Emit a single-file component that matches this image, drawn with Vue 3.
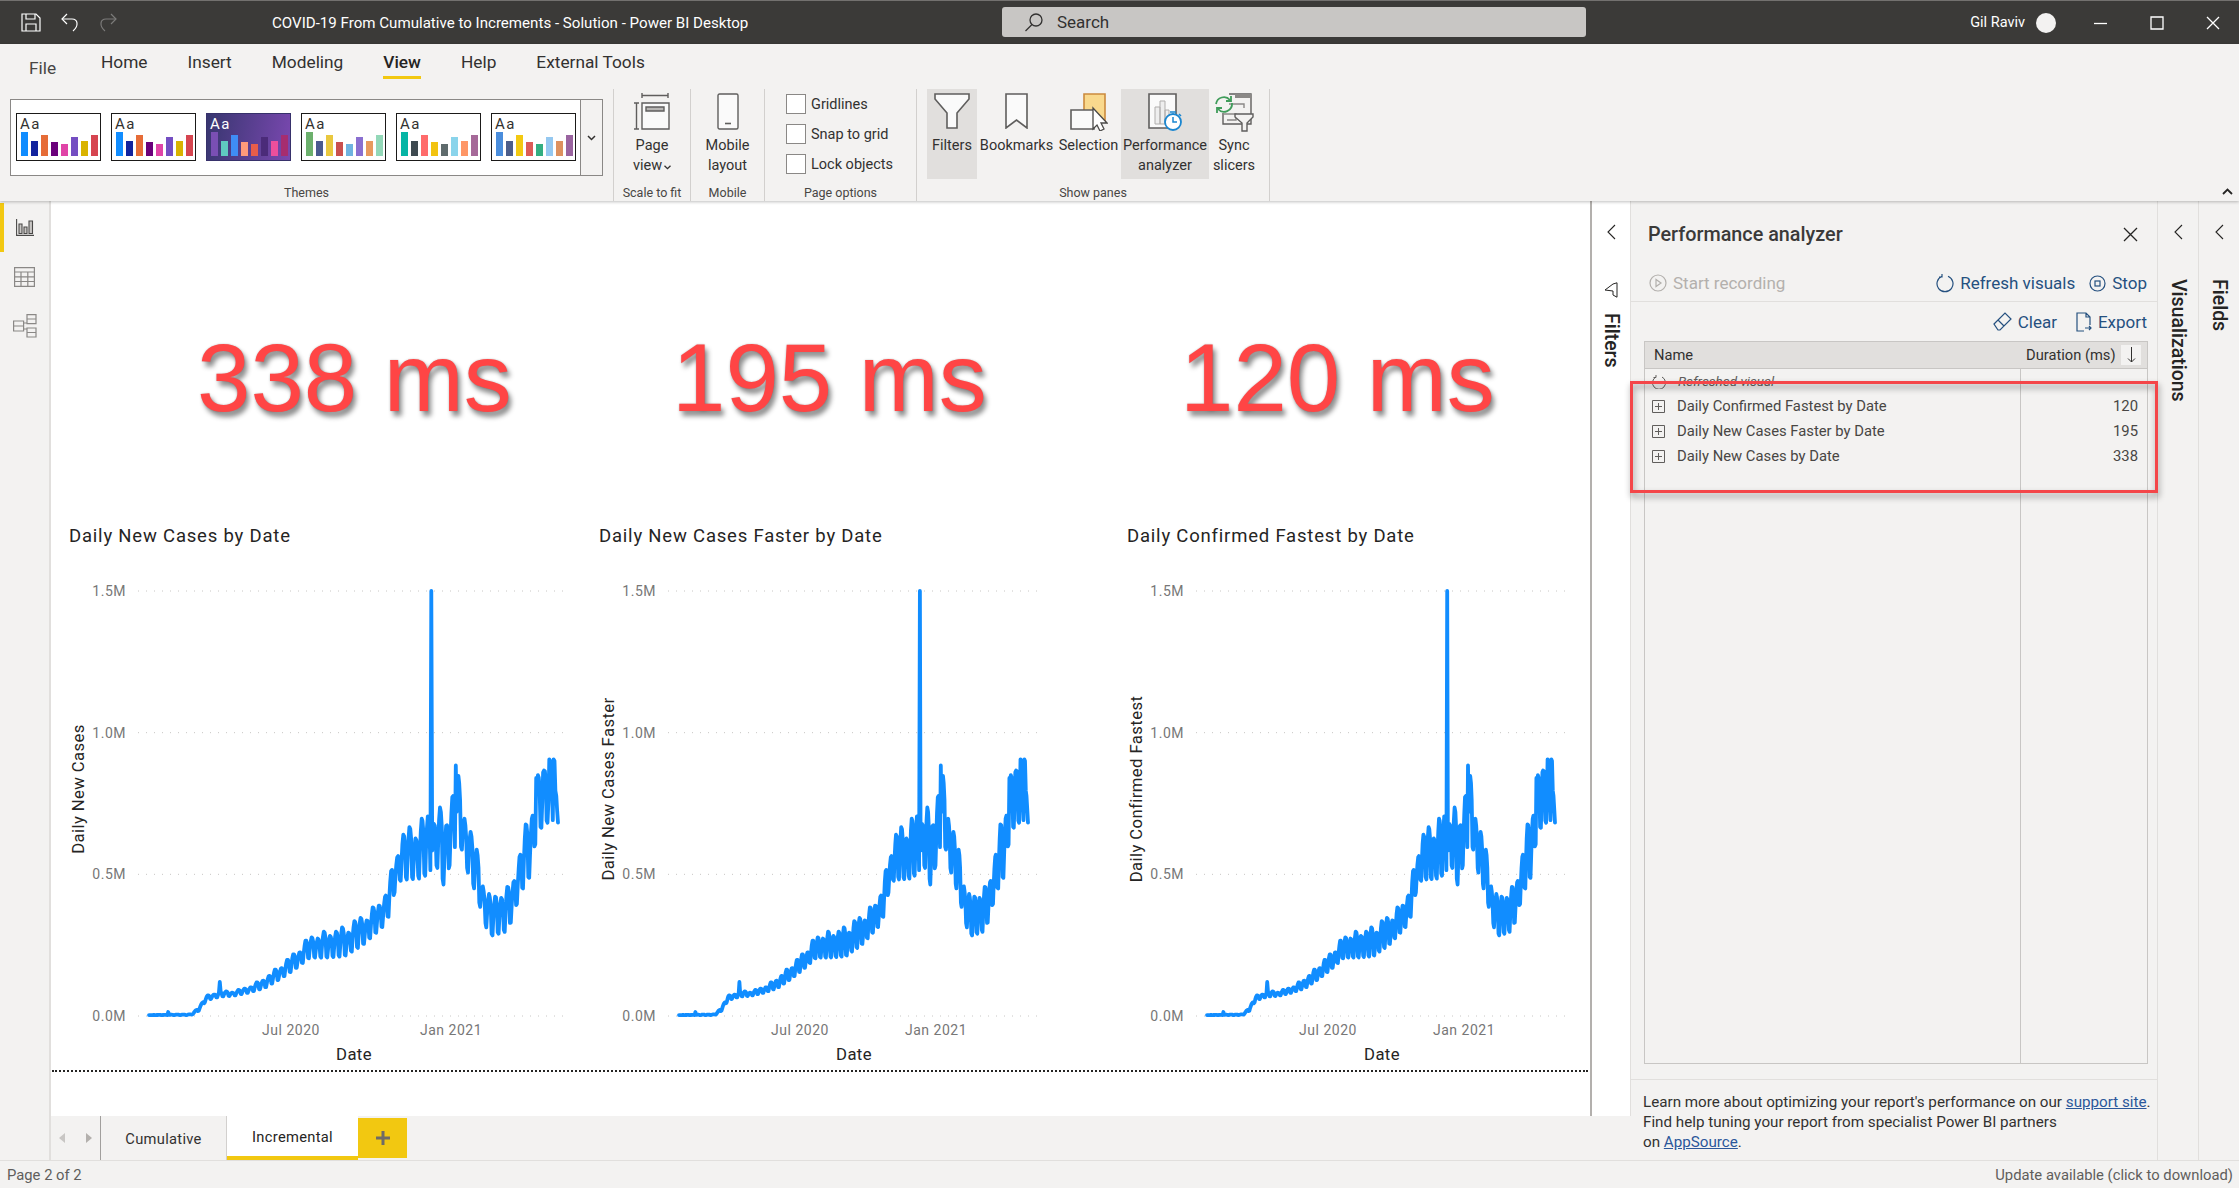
<script setup>
// weekly-saw envelope of the covid line, read off the reference: [x, high y, low y] in crop coordinates
const envelope = [
  [390, 1176, 1176], [500, 1174, 1176], [520, 1158, 1166], [540, 1132, 1142], [575, 1122, 1134], [610, 1122, 1132],
  [650, 1112, 1125], [690, 1092, 1115], [730, 1065, 1095], [770, 1035, 1072], [810, 995, 1045], [850, 985, 1045],
  [900, 975, 1042], [950, 950, 1015], [1000, 910, 975], [1020, 855, 945], [1035, 808, 880], [1050, 760, 868],
  [1100, 730, 865], [1145, 698, 840], [1165, 720, 895], [1175, 685, 835], [1192, 608, 795], [1210, 680, 800],
  [1220, 730, 845], [1240, 780, 890], [1255, 830, 930], [1270, 890, 975], [1285, 910, 995], [1305, 885, 990],
  [1325, 885, 985], [1340, 860, 955], [1355, 815, 910], [1368, 755, 885], [1385, 715, 860], [1400, 632, 780],
  [1420, 622, 738], [1435, 592, 738], [1447, 592, 740], [1458, 738, 738],
]
const week = [0.05, 0, 0.45, 0.8, 1, 0.95, 0.75]
const days = 469
// one-off days: the small bumps, the big spike and the tallest peaks
const specials = { 22: 0.014, 81: 0.12, 323: 1.5, 351: 0.884, 443: 0.84, 451: 0.86, 458: 0.906, 459: 0.9, 463: 0.906, 464: 0.9 }

function valueAt(day) {
  if (specials[day]) return specials[day]
  const x = 390 + (1068 * day) / (days - 1)
  let i = 0
  while (i < envelope.length - 2 && envelope[i + 1][0] < x) i++
  const a = envelope[i]
  const b = envelope[i + 1]
  const f = (x - a[0]) / (b[0] - a[0])
  const hi = a[1] + (b[1] - a[1]) * f
  const lo = a[2] + (b[2] - a[2]) * f
  // the real data is not a clean saw, so vary each week's swing a little
  const wk = Math.floor(day / 7)
  const amp = Math.min(1, 0.92 + 0.2 * Math.sin(wk * 2.3))
  return (1178 - (lo + (hi - lo) * week[day % 7] * amp)) / 645
}

const zeroY = 455
const maxY = 30
const toY = (v) => zeroY - (v * (zeroY - maxY)) / 1.5

function linePoints(x0, x1) {
  const pts = []
  for (let d = 0; d < days; d++) {
    const x = x0 + ((x1 - x0) * d) / (days - 1)
    pts.push(x.toFixed(1) + ',' + toY(valueAt(d)).toFixed(1))
  }
  return pts.join(' ')
}

const charts = [
  { title: 'Daily New Cases by Date', yTitle: 'Daily New Cases', w: 530, gridEnd: 514, jul: 239, jan: 399, date: 302, points: linePoints(97, 506) },
  { title: 'Daily New Cases Faster by Date', yTitle: 'Daily New Cases Faster', w: 528, gridEnd: 456, jul: 218, jan: 354, date: 272, points: linePoints(97, 446) },
  { title: 'Daily Confirmed Fastest by Date', yTitle: 'Daily Confirmed Fastest', w: 480, gridEnd: 456, jul: 218, jan: 354, date: 272, points: linePoints(97, 445) },
]
const yTicks = [
  { label: '1.5M', v: 1.5 },
  { label: '1.0M', v: 1 },
  { label: '0.5M', v: 0.5 },
  { label: '0.0M', v: 0 },
]

const bigNumbers = ['338 ms', '195 ms', '120 ms']
const ribbonTabs = ['Home', 'Insert', 'Modeling', 'View', 'Help', 'External Tools']
const heights = [24, 15, 21, 14, 12, 19, 15, 21]
const themes = [
  { colors: ['#118dff', '#12239e', '#e66c37', '#6b007b', '#e044a7', '#744ec2', '#d9b300', '#d64550'] },
  { colors: ['#118dff', '#12239e', '#e66c37', '#6b007b', '#e044a7', '#744ec2', '#d9b300', '#d64550'] },
  { dark: true, colors: ['#7a4fb4', '#5fc9c0', '#3f8df5', '#ff9a7a', '#e85d4a', '#4b2b79', '#ec4f9c', '#a62d70'] },
  { colors: ['#6cb06c', '#4a5a8f', '#e9c83f', '#c9504e', '#6fb3e0', '#8a6fd0', '#e89a5e', '#93d8b8'] },
  { colors: ['#06b5a5', '#3e4a50', '#ff6b6b', '#f2c311', '#5f6b6d', '#8ad4eb', '#fe9666', '#a66999'] },
  { colors: ['#4a8ddc', '#4c5d8a', '#f3c911', '#dc5b57', '#33ae81', '#95c8f0', '#dd915f', '#9a64a0'] },
]
const pageOptions = ['Gridlines', 'Snap to grid', 'Lock objects']
const results = [
  { name: 'Daily Confirmed Fastest by Date', ms: 120 },
  { name: 'Daily New Cases Faster by Date', ms: 195 },
  { name: 'Daily New Cases by Date', ms: 338 },
]
</script>

<template>
  <div class="app">
    <header class="titlebar">
      <div class="tb-left">
        <svg class="qa" width="20" height="19" viewBox="0 0 20 19" fill="none" stroke="#fff" stroke-width="1.2">
          <path d="M1 1h14l4 4v13H1z" /><path d="M5 1v5h9V1M5 18v-7h10v7" />
        </svg>
        <svg class="qa" width="18" height="19" viewBox="0 0 18 19" fill="none" stroke="#fff" stroke-width="1.2">
          <path d="M1 6h10c6 0 7 7 1 12" /><path d="M6 1 1 6l5 5" />
        </svg>
        <svg class="qa" width="18" height="19" viewBox="0 0 18 19" fill="none" stroke="#7c7b7a" stroke-width="1.2">
          <path d="M17 6H7c-6 0-7 7-1 12" /><path d="m12 1 5 5-5 5" />
        </svg>
        <span class="doc-title">COVID-19 From Cumulative to Increments - Solution - Power BI Desktop</span>
      </div>
      <div class="search">
        <svg width="20" height="20" viewBox="0 0 20 20" fill="none" stroke="#323130" stroke-width="1.3">
          <circle cx="12" cy="8" r="6" /><path d="M8 12.5 1.5 19" />
        </svg>
        <span>Search</span>
      </div>
      <div class="tb-right">
        <span class="user">Gil Raviv</span>
        <span class="avatar"></span>
        <svg class="win min" width="14" height="14" viewBox="0 0 14 14" stroke="#fff" stroke-width="1.3"><path d="M0 7.5h13" /></svg>
        <svg class="win" width="14" height="14" viewBox="0 0 14 14" fill="none" stroke="#fff" stroke-width="1.3"><path d="M1 1h12v12H1z" /></svg>
        <svg class="win" width="14" height="14" viewBox="0 0 14 14" fill="none" stroke="#fff" stroke-width="1.3"><path d="m1 1 12 12M13 1 1 13" /></svg>
      </div>
    </header>

    <section class="ribbon">
      <nav class="tabs">
        <span class="file-tab">File</span>
        <span v-for="t in ribbonTabs" :key="t" class="tab" :class="{ active: t === 'View' }">{{ t }}</span>
      </nav>
      <div class="groups">
        <div class="group themes-group">
          <div class="group-body">
            <div class="gallery">
              <div class="gallery-items">
                <div v-for="(theme, i) in themes" :key="i" class="thumb" :class="{ dark: theme.dark }">
                  <span class="aa">Aa</span>
                  <div class="bars">
                    <i v-for="(c, j) in theme.colors" :key="j" :style="{ background: c, height: heights[j] + 'px' }"></i>
                  </div>
                </div>
              </div>
              <div class="gallery-more">
                <svg width="9" height="6" viewBox="0 0 9 6" fill="none" stroke="#323130" stroke-width="1.5"><path d="m1 1 3.5 3.5L8 1" /></svg>
              </div>
            </div>
          </div>
          <span class="group-label">Themes</span>
        </div>

        <div class="group scale-group">
          <div class="group-body">
            <button class="rb-btn w-full">
              <span class="rb-icon">
                <svg width="38" height="37" viewBox="0 0 38 37" fill="none" stroke="#5f5e5d" stroke-width="1.4">
                  <path d="M9 2.500h26M9 0v5M35 0v5" /><path d="M1 10h5M1 36h5M3.500 10v26" />
                  <path d="M9 10h27v26H9z" fill="#fafafa" /><path d="M13 14h18v4H13z" fill="#b8b6b4" />
                </svg>
              </span>
              <span>Page</span>
              <span>view<svg class="caret" width="7" height="5" viewBox="0 0 7 5" fill="none" stroke="#323130" stroke-width="1.3"><path d="m.5 .7 3 3 3-3" /></svg></span>
            </button>
          </div>
          <span class="group-label">Scale to fit</span>
        </div>

        <div class="group mobile-group">
          <div class="group-body">
            <button class="rb-btn w-full">
              <span class="rb-icon">
                <svg width="22" height="37" viewBox="0 0 22 37" fill="#fafafa" stroke="#5f5e5d" stroke-width="1.4">
                  <rect x="1" y="1" width="20" height="35" rx="1.500" /><path d="M8 30.500h6" stroke-width="1.600" />
                </svg>
              </span>
              <span>Mobile</span>
              <span>layout</span>
            </button>
          </div>
          <span class="group-label">Mobile</span>
        </div>

        <div class="group options-group">
          <div class="group-body checks">
            <label v-for="o in pageOptions" :key="o" class="check"><i></i>{{ o }}</label>
          </div>
          <span class="group-label">Page options</span>
        </div>

        <div class="group panes-group">
          <div class="group-body panes">
            <button class="rb-btn pressed" style="width: 50px">
              <span class="rb-icon">
                <svg width="36" height="36" viewBox="0 0 36 36" fill="#fafafa" stroke="#5f5e5d" stroke-width="1.6">
                  <path d="M1 1h34v5L23 20v15h-10V20L1 6z" />
                </svg>
              </span>
              <span>Filters</span>
            </button>
            <button class="rb-btn" style="width: 79px">
              <span class="rb-icon">
                <svg width="23" height="36" viewBox="0 0 23 36" fill="#fafafa" stroke="#5f5e5d" stroke-width="1.6"><path d="M1 1h21v34l-10.500-8L1 35z" /></svg>
              </span>
              <span>Bookmarks</span>
            </button>
            <button class="rb-btn" style="width: 65px">
              <span class="rb-icon">
                <svg width="38" height="38" viewBox="0 0 38 38" stroke-width="1.6">
                  <path d="M14 1h21v27H14z" fill="#f9d98d" stroke="#cb8a3e" />
                  <path d="M1 17h23v19H1z" fill="#fafafa" stroke="#5f5e5d" />
                  <path d="m23 15 14 15h-6l3 6-4 2-3-6-4 4z" fill="#fff" stroke="#4a4948" stroke-width="1.300" />
                </svg>
              </span>
              <span>Selection</span>
            </button>
            <button class="rb-btn pressed" style="width: 88px">
              <span class="rb-icon">
                <svg width="35" height="39" viewBox="0 0 35 39" fill="none">
                  <path d="M1 1h27v34H1z" fill="#fafafa" stroke="#5f5e5d" stroke-width="1.600" />
                  <path d="M7 14h5v17H7zM12 8h5v23h-5zM17 17h4v14h-4z" fill="#eee" stroke="#b0aead" />
                  <circle cx="25" cy="29" r="8" fill="#fff" stroke="#1a86d0" stroke-width="1.800" />
                  <path d="M25 24v5h4M22 19h6M31 21l2 2" stroke="#1a86d0" stroke-width="1.500" />
                </svg>
              </span>
              <span>Performance</span>
              <span>analyzer</span>
            </button>
            <button class="rb-btn" style="width: 50px">
              <span class="rb-icon">
                <svg width="40" height="39" viewBox="0 0 40 39" fill="none">
                  <path d="M15 1h22v30H9V20" stroke="#5f5e5d" stroke-width="1.400" />
                  <path d="M21 1h16v4H21z" fill="#8a8886" />
                  <path d="M15 11h15v4M9 21h13v6H13" stroke="#8a8886" stroke-width="1.400" />
                  <path d="M2 11a8 8 0 0 1 14-4M18 10a8 8 0 0 1-14 6" stroke="#3f9c5a" stroke-width="1.800" />
                  <path d="M12 8h5V3M8 15H3v5" stroke="#3f9c5a" stroke-width="1.800" />
                  <path d="M21 21h18v3l-6 6v8h-5v-8l-7-6z" fill="#f3f2f1" stroke="#5f5e5d" stroke-width="1.400" />
                </svg>
              </span>
              <span>Sync</span>
              <span>slicers</span>
            </button>
          </div>
          <span class="group-label">Show panes</span>
        </div>

        <svg class="collapse" width="11" height="7" viewBox="0 0 11 7" fill="none" stroke="#252423" stroke-width="1.800"><path d="m1 6 4.500-4.500L10 6" /></svg>
      </div>
    </section>

    <main class="main">
      <aside class="rail">
        <div class="rail-item current">
          <svg width="18" height="17" viewBox="0 0 18 17" fill="none" stroke="#4a4948" stroke-width="1.100">
            <path d="M.6 0v16.400H18" /><path d="M3 5h3v9.500H3zM8 8h3v6.500H8zM13 2h3.500v12.500H13z" fill="#c8c6c4" />
          </svg>
        </div>
        <div class="rail-item">
          <svg width="21" height="20" viewBox="0 0 21 20" fill="none" stroke="#8a8886" stroke-width="1.200">
            <path d="M.6.6h19.800v18.800H.6zM.6 5h19.800M.6 9.800h19.800M.6 14.500h19.800M7 5v14.400M13.800 5v14.400" />
          </svg>
        </div>
        <div class="rail-item">
          <svg width="24" height="24" viewBox="0 0 24 24" fill="none" stroke="#8a8886" stroke-width="1.200">
            <path d="M.6 7h10v10H.6zM.6 12h10M14 .6h9v9h-9zM14 5h9M14 14h9v9h-9zM14 18.500h9M10.600 9H14M10.600 15H14" />
          </svg>
        </div>
      </aside>

      <div class="workspace">
        <div class="stage">
          <div class="canvas">
            <div class="big-row">
              <span v-for="n in bigNumbers" :key="n" class="big">{{ n }}</span>
            </div>
            <div class="chart-row">
              <div v-for="c in charts" :key="c.title" class="chart" :style="{ width: c.w + 'px' }">
                <h3 class="chart-title">{{ c.title }}</h3>
                <svg :width="c.w" height="509" class="plot">
                  <g v-for="t in yTicks" :key="t.label">
                    <text class="tick" x="74" :y="toY(t.v) + 5" text-anchor="end">{{ t.label }}</text>
                    <line x1="86" :x2="c.gridEnd" :y1="toY(t.v)" :y2="toY(t.v)" stroke="#c8c6c4" stroke-dasharray="1 7" />
                  </g>
                  <text class="axis-title" :transform="`translate(32 228) rotate(-90)`" text-anchor="middle">{{ c.yTitle }}</text>
                  <polyline :points="c.points" fill="none" stroke="#118dff" stroke-width="3.800" stroke-linejoin="round" stroke-linecap="round" />
                  <text class="tick" :x="c.jul" y="474" text-anchor="middle">Jul 2020</text>
                  <text class="tick" :x="c.jan" y="474" text-anchor="middle">Jan 2021</text>
                  <text class="axis-title" :x="c.date" y="499" text-anchor="middle">Date</text>
                </svg>
              </div>
            </div>
          </div>
          <div class="filters-pane">
            <svg width="9" height="16" viewBox="0 0 9 16" fill="none" stroke="#252423" stroke-width="1.100"><path d="M8 1 1 8l7 7" /></svg>
            <svg class="funnel" width="14" height="16" viewBox="0 0 14 16" fill="none" stroke="#252423" stroke-width="1"><path d="M9 2 13 .8v14.400L9 13 V9L1 8z" /></svg>
            <span class="pane-title filters-title">Filters</span>
          </div>
        </div>
        <div class="sheet-tabs">
          <div class="sheet-arrows">
            <svg width="7" height="10" viewBox="0 0 7 10" fill="#c8c6c4"><path d="M6 0v10L0 5z" /></svg>
            <svg width="7" height="10" viewBox="0 0 7 10" fill="#b3b0ad"><path d="M0 0v10l6-5z" /></svg>
          </div>
          <span class="sheet">Cumulative</span>
          <span class="sheet on">Incremental</span>
          <span class="sheet-add">
            <svg width="14" height="14" viewBox="0 0 14 14" fill="#6e6b66"><path d="M5.500 0h3v5.500H14v3H8.500V14h-3V8.500H0v-3h5.500z" /></svg>
          </span>
        </div>
      </div>

      <section class="perf">
        <div class="perf-head">
          <span class="perf-title">Performance analyzer</span>
          <svg width="15" height="15" viewBox="0 0 15 15" fill="none" stroke="#252423" stroke-width="1.300"><path d="m1 1 13 13M14 1 1 14" /></svg>
        </div>
        <div class="perf-actions">
          <span class="act disabled">
            <svg width="18" height="18" viewBox="0 0 18 18" fill="none" stroke="#b3b0ad" stroke-width="1.200"><circle cx="9" cy="9" r="8" /><path d="M7 5.500v7l5-3.500z" /></svg>
            Start recording
          </span>
          <span class="act push">
            <svg width="18" height="20" viewBox="0 0 18 20" fill="none" stroke="#25507f" stroke-width="1.200"><path d="M6 3.300a8 8 0 1 0 6 0M6 1v3H3" /></svg>
            Refresh visuals
          </span>
          <span class="act">
            <svg width="17" height="17" viewBox="0 0 17 17" fill="none" stroke="#25507f" stroke-width="1.200"><circle cx="8.500" cy="8.500" r="7.500" /><rect x="6" y="6" width="5" height="5" /></svg>
            Stop
          </span>
        </div>
        <div class="perf-tools">
          <span class="act">
            <svg width="19" height="19" viewBox="0 0 19 19" fill="none" stroke="#25507f" stroke-width="1.200"><path d="M1 12 12 1l6 6-11 11H5zM5 8l6 6" /></svg>
            Clear
          </span>
          <span class="act">
            <svg width="16" height="20" viewBox="0 0 16 20" fill="none" stroke="#25507f" stroke-width="1.200"><path d="M8 19H1V1h9l4 4v8M10 1v4h4M9 16h6m-2-2 2 2-2 2" /></svg>
            Export
          </span>
        </div>

        <div class="table">
          <div class="table-head">
            <span class="th-name">Name</span>
            <span class="th-ms">Duration (ms)</span>
            <span class="sort"><svg width="9" height="16" viewBox="0 0 9 16" fill="none" stroke="#323130" stroke-width="1"><path d="M4.500 0v15M1 11.500l3.500 3.500L8 11.500" /></svg></span>
          </div>
          <div class="table-body">
            <div class="col-name">
              <div class="row refreshed">
                <svg width="14" height="14" viewBox="0 0 14 14" fill="none" stroke="#605e5c" stroke-width="1"><path d="M4 2a6.500 6.500 0 1 0 6 0M4 0v2.500H1.500" /></svg>
                <em>Refreshed visual</em>
              </div>
              <div v-for="r in results" :key="r.name" class="row">
                <svg width="13" height="13" viewBox="0 0 13 13" fill="none" stroke="#605e5c" stroke-width="1"><path d="M.5.500h12v12H.5zM3 6.500h7M6.500 3v7" /></svg>
                <span>{{ r.name }}</span>
              </div>
            </div>
            <div class="col-ms">
              <div class="row"></div>
              <div v-for="r in results" :key="r.ms" class="row">{{ r.ms }}</div>
            </div>
          </div>
        </div>

        <p class="perf-foot">
          Learn more about optimizing your report's performance on our <a>support site</a>.<br />
          Find help tuning your report from specialist Power BI partners<br />
          on <a>AppSource</a>.
        </p>
        <div class="callout"></div>
      </section>

      <aside class="side-pane vis">
        <svg width="9" height="16" viewBox="0 0 9 16" fill="none" stroke="#252423" stroke-width="1.100"><path d="M8 1 1 8l7 7" /></svg>
        <span class="pane-title vis-title">Visualizations</span>
      </aside>
      <aside class="side-pane fields">
        <svg width="9" height="16" viewBox="0 0 9 16" fill="none" stroke="#252423" stroke-width="1.100"><path d="M8 1 1 8l7 7" /></svg>
        <span class="pane-title fields-title">Fields</span>
      </aside>
    </main>

    <footer class="status">
      <span>Page 2 of 2</span>
      <span>Update available (click to download)</span>
    </footer>
  </div>
</template>

<style>
html, body {
  margin: 0;
  background: #f3f2f1;
}
</style>

<style scoped>
.app {
  width: 2239px;
  height: 1188px;
  display: flex;
  flex-direction: column;
  overflow: hidden;
  font-family: Roboto, "Liberation Sans", sans-serif;
  font-size: 14px;
  color: #323130;
  background: #f3f2f1;
}

.titlebar {
  flex: none;
  height: 43px;
  display: flex;
  align-items: center;
  background: #3b3a38;
  border-top: 1px solid #73716f;
  color: #fff;
}
.tb-left {
  width: 1002px;
  flex: none;
  display: flex;
  align-items: center;
  padding-left: 21px;
  box-sizing: border-box;
}
.qa {
  margin-right: 20px;
}
.doc-title {
  margin-left: 135px;
  font-size: 15.100px;
  white-space: nowrap;
}
.search {
  width: 584px;
  height: 30px;
  flex: none;
  display: flex;
  align-items: center;
  gap: 13px;
  padding-left: 22px;
  box-sizing: border-box;
  margin-top: -1px;
  background: #c8c6c4;
  border-radius: 3px;
  color: #323130;
  font-size: 17px;
}
.tb-right {
  flex: 1;
  display: flex;
  align-items: center;
  justify-content: flex-end;
  padding-right: 19px;
}
.user {
  font-size: 14.500px;
}
.avatar {
  width: 20px;
  height: 20px;
  margin: 0 38px 0 11px;
  border-radius: 50%;
  background: #f3f2f1;
}
.win {
  margin-left: 42px;
}
.win.min {
  margin-left: 0;
}

.ribbon {
  flex: none;
  height: 157px;
  display: flex;
  flex-direction: column;
  box-shadow: 0 1px 3px rgba(0, 0, 0, 0.25);
  position: relative;
  z-index: 2;
}
.tabs {
  height: 45px;
  flex: none;
  display: flex;
  gap: 40px;
  padding: 8px 0 0 101px;
  box-sizing: border-box;
  position: relative;
  font-size: 17.300px;
}
.file-tab {
  position: absolute;
  left: 29px;
  top: 14px;
  color: #484644;
}
.tab {
  height: 28px;
  line-height: 20px;
}
.tab.active {
  font-weight: 500;
  color: #252423;
  border-bottom: 3px solid #f2c811;
  box-sizing: content-box;
  height: 24px;
}

.groups {
  flex: 1;
  display: flex;
}
.group {
  display: flex;
  flex-direction: column;
  border-right: 1px solid #d2d0ce;
  box-sizing: border-box;
  font-size: 14.500px;
}
.group-body {
  height: 90px;
  flex: none;
}
.group-label {
  height: 20px;
  line-height: 28px;
  text-align: center;
  font-size: 12.500px;
  color: #484644;
}
.themes-group { width: 614px; padding: 10px 10px 0; }
.themes-group .group-body { height: 80px; }
.scale-group { width: 77px; }
.mobile-group { width: 74px; }
.options-group { width: 152px; }
.panes-group { width: 353px; }

.gallery {
  width: 593px;
  height: 77px;
  display: flex;
  background: #fff;
  border: 1px solid #8a8886;
  box-sizing: border-box;
}
.gallery-items {
  flex: 1;
  display: flex;
  gap: 10px;
  padding: 13px 0 0 5px;
}
.gallery-more {
  width: 21px;
  display: flex;
  align-items: center;
  justify-content: center;
  background: #f3f2f1;
  border-left: 1px solid #8a8886;
}
.thumb {
  width: 85px;
  height: 48px;
  box-sizing: border-box;
  border: 1px solid #1b1a19;
  background: #fff;
  position: relative;
}
.thumb.dark {
  border-color: #37316b;
  background: linear-gradient(100deg, #37366f, #7a48b0);
  color: #fff;
}
.aa {
  position: absolute;
  left: 3px;
  top: 1px;
  font-size: 15px;
  letter-spacing: 1.500px;
  line-height: 18px;
}
.bars {
  position: absolute;
  left: 4px;
  bottom: 4px;
  display: flex;
  align-items: flex-end;
  gap: 3px;
}
.bars i {
  display: block;
  width: 7px;
}

.rb-btn {
  display: flex;
  flex-direction: column;
  align-items: center;
  height: 90px;
  padding: 0;
  border: none;
  background: transparent;
  font: inherit;
  color: inherit;
  line-height: 20px;
  white-space: nowrap;
}
.rb-btn.w-full {
  width: 100%;
}
.rb-btn.pressed {
  background: #e1dfdd;
}
.rb-icon {
  height: 47px;
  flex: none;
  display: flex;
  padding-top: 4px;
  box-sizing: border-box;
}
.caret {
  margin-left: 2px;
}

.checks {
  display: flex;
  flex-direction: column;
  padding: 5px 0 0 21px;
  box-sizing: border-box;
}
.check {
  height: 30px;
  flex: none;
  display: flex;
  align-items: flex-start;
  gap: 5px;
  line-height: 22px;
}
.check i {
  width: 20px;
  height: 20px;
  box-sizing: border-box;
  background: #fff;
  border: 1px solid #8a8886;
}
.panes {
  display: flex;
  padding-left: 10px;
}
.collapse {
  align-self: flex-end;
  margin: 0 6px 6px auto;
}

.main {
  flex: 1;
  min-height: 0;
  display: flex;
}
.rail {
  width: 51px;
  flex: none;
  border-right: 2px solid #e1dfdd;
  box-sizing: border-box;
  padding-top: 2px;
}
.rail-item {
  height: 49px;
  display: flex;
  align-items: center;
  justify-content: center;
  border-left: 4px solid transparent;
  padding-right: 4px;
}
.rail-item.current {
  border-left-color: #f2c811;
}
.workspace {
  width: 1580px;
  flex: none;
  display: flex;
  flex-direction: column;
}
.stage {
  flex: 1;
  min-height: 0;
  display: flex;
  background: #fff;
}
.canvas {
  width: 1539px;
  flex: none;
  padding-left: 1px;
  box-sizing: border-box;
}
.big-row {
  display: grid;
  grid-template-columns: 475px 508px auto;
  height: 308px;
  padding: 122px 0 0 145px;
  box-sizing: border-box;
}
.big {
  font-family: "Liberation Sans", Arial, sans-serif;
  font-size: 96px;
  line-height: 110px;
  color: #ff4545;
  white-space: nowrap;
  -webkit-text-stroke: 8px #fff;
  paint-order: stroke fill;
  text-shadow: 3px 5px 5px rgba(0, 0, 0, 0.45), 0 0 2px rgba(0, 0, 0, 0.25);
}
.chart-row {
  display: flex;
  border-bottom: 2px dotted #252423;
  margin-right: 2px;
}
.chart {
  flex: none;
}
.chart-title {
  height: 52px;
  margin: 0;
  padding-left: 17px;
  font-weight: 400;
  font-size: 18.500px;
  line-height: 54px;
  letter-spacing: 0.800px;
  color: #252423;
}
.plot {
  display: block;
}
.tick {
  font-size: 14px;
  letter-spacing: 0.5px;
  fill: #777;
}
.axis-title {
  font-size: 16.700px;
  letter-spacing: 0.4px;
  fill: #252423;
}
.filters-pane {
  flex: 1;
  display: flex;
  flex-direction: column;
  align-items: center;
  border-left: 2px solid #b3b0ad;
  border-right: 1px solid #e1dfdd;
  padding-top: 23px;
}
.funnel {
  margin-top: 42px;
}
.pane-title {
  writing-mode: vertical-rl;
  font-weight: 500;
  font-size: 19.500px;
  color: #252423;
}
.filters-title {
  margin-top: 15px;
}
.sheet-tabs {
  height: 44px;
  flex: none;
  display: flex;
  background: #f3f2f1;
  font-size: 14.700px;
  letter-spacing: 0.3px;
}
.sheet-arrows {
  width: 50px;
  display: flex;
  align-items: center;
  justify-content: center;
  gap: 20px;
  box-sizing: border-box;
  border-right: 1px solid #a19f9d;
}
.sheet {
  width: 126px;
  line-height: 46px;
  text-align: center;
  box-sizing: border-box;
  border-right: 1px solid #d2d0ce;
}
.sheet.on {
  width: 131px;
  background: #fff;
  color: #252423;
  border-right: none;
  border-bottom: 4px solid #f2c811;
  line-height: 42px;
}
.sheet-add {
  width: 49px;
  height: 40px;
  margin-top: 2px;
  display: flex;
  align-items: center;
  justify-content: center;
  background: #f2c811;
}

.perf {
  flex: 1;
  min-width: 0;
  display: flex;
  flex-direction: column;
  position: relative;
  border-right: 1px solid #e1dfdd;
}
.perf-head {
  height: 64px;
  flex: none;
  display: flex;
  align-items: center;
  justify-content: space-between;
  padding: 2px 19px 0 17px;
  box-sizing: border-box;
}
.perf-title {
  font-size: 19.800px;
  font-weight: 500;
  color: #3b3a39;
}
.perf-actions {
  height: 36px;
  flex: none;
  display: flex;
  align-items: center;
  gap: 14px;
  padding: 0 10px 0 18px;
  border-bottom: 1px solid #e1dfdd;
}
.perf-tools {
  height: 39px;
  flex: none;
  display: flex;
  align-items: center;
  justify-content: flex-end;
  gap: 19px;
  padding-right: 10px;
}
.act {
  display: flex;
  align-items: center;
  gap: 6px;
  font-size: 17px;
  color: #25507f;
}
.act.disabled {
  color: #b3b0ad;
}
.act.push {
  margin-left: auto;
}
.table {
  width: 504px;
  height: 723px;
  flex: none;
  margin-left: 13px;
  display: flex;
  flex-direction: column;
  box-sizing: border-box;
  border: 1px solid #c8c6c4;
  font-size: 14.700px;
}
.table-head {
  height: 27px;
  flex: none;
  display: flex;
  align-items: center;
  background: #e1dfdd;
  border-bottom: 1px solid #c8c6c4;
  box-sizing: border-box;
}
.th-name {
  width: 381px;
  padding-left: 9px;
  box-sizing: border-box;
}
.th-ms {
  width: 95px;
  white-space: nowrap;
}
.sort {
  width: 20px;
  height: 20px;
  display: flex;
  align-items: center;
  justify-content: center;
  background: #f3f2f1;
}
.table-body {
  flex: 1;
  display: flex;
  min-height: 0;
}
.col-name {
  width: 375px;
  flex: none;
}
.col-ms {
  flex: 1;
  border-left: 1px solid #c8c6c4;
  text-align: right;
  padding-right: 9px;
}
.row {
  height: 25px;
  line-height: 25px;
  font-size: 14.800px;
  color: #484644;
}
.col-name .row {
  display: flex;
  align-items: center;
  gap: 12px;
  padding-left: 7px;
}
.col-name .row svg {
  flex: none;
}
.refreshed em {
  font-size: 13.500px;
  color: #605e5c;
}
.perf-foot {
  margin: 15px 0 0;
  padding: 12px 0 0 12px;
  border-top: 1px solid #e1dfdd;
  font-size: 15.200px;
  line-height: 20px;
  color: #323130;
  white-space: nowrap;
}
.perf-foot a {
  color: #2b579a;
  text-decoration: underline;
}
.callout {
  position: absolute;
  left: -1px;
  right: -1px;
  top: 180px;
  height: 112px;
  box-sizing: border-box;
  border: 3px solid #f44649;
  filter: drop-shadow(1px 4px 3px rgba(0, 0, 0, 0.4));
}

.side-pane {
  width: 40px;
  flex: none;
  display: flex;
  flex-direction: column;
  align-items: center;
  padding-top: 23px;
  box-sizing: border-box;
}
.vis {
  width: 41px;
  border-right: 1px solid #e1dfdd;
}
.vis-title,
.fields-title {
  margin-top: 39px;
}

.status {
  height: 28px;
  flex: none;
  display: flex;
  align-items: center;
  justify-content: space-between;
  padding: 0 6px 0 7px;
  border-top: 1px solid #e1dfdd;
  box-sizing: border-box;
  font-size: 14.800px;
  color: #605e5c;
}
</style>
